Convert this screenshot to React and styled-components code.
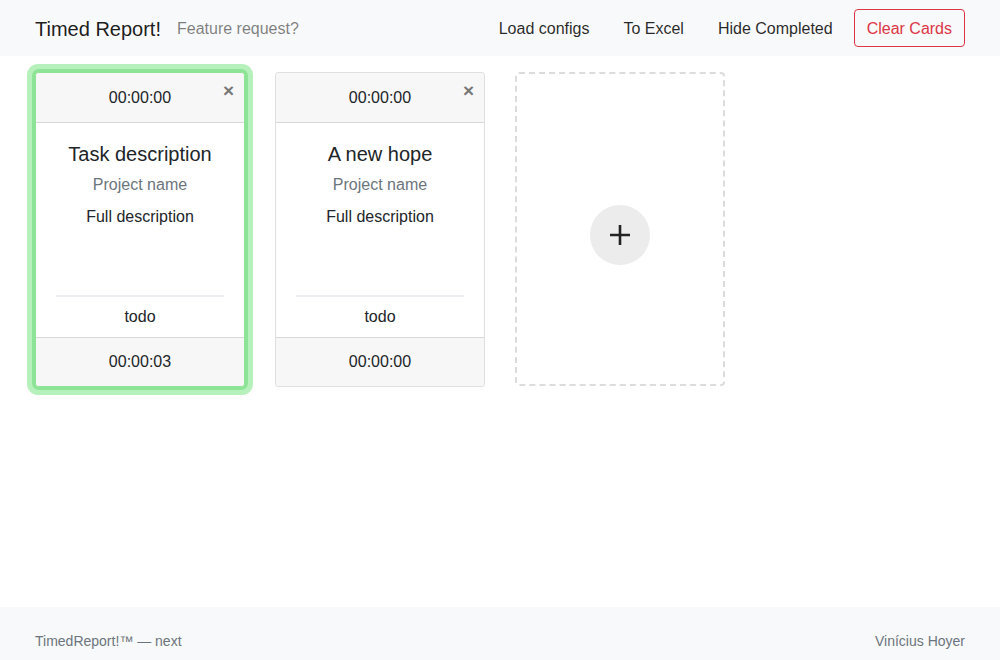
import React from 'react'
import styled, { createGlobalStyle, css } from 'styled-components'

const GlobalStyle = createGlobalStyle`
  * { box-sizing: border-box; }
  body {
    margin: 0;
    font-family: 'Liberation Sans', Arial, sans-serif;
    font-size: 16px;
    line-height: 1.5;
    color: #212529;
    background: #ffffff;
  }
`

const Navbar = styled.nav`
  height: 56px;
  background: #f8f9fa;
  display: flex;
  align-items: center;
  padding: 0 35px;
`

const Brand = styled.span`
  font-size: 20px;
  color: rgba(0, 0, 0, 0.9);
  margin-right: 16px;
  padding-top: 2px;
`

const NavLink = styled.a`
  color: ${p => (p.muted ? 'rgba(0, 0, 0, 0.5)' : 'rgba(0, 0, 0, 0.85)')};
  padding: 9px ${p => (p.muted ? '0' : '17px')} 7px;
  text-decoration: none;
  cursor: pointer;
`

const Spacer = styled.div`
  flex: 1;
`

const DangerButton = styled.button`
  font-family: inherit;
  font-size: 16px;
  line-height: 24px;
  height: 38px;
  padding: 7px 12px 5px;
  margin-left: 4px;
  color: #dc3545;
  background: transparent;
  border: 1px solid #dc3545;
  border-radius: 4px;
`

const Main = styled.main`
  min-height: calc(100vh - 109px);
  padding: 16px 35px;
  display: flex;
  align-items: flex-start;
  gap: 30px;
`

const Card = styled.div`
  width: 210px;
  display: flex;
  flex-direction: column;
  border: 1px solid rgba(0, 0, 0, 0.125);
  border-radius: 4px;
  background: #fff;
  text-align: center;
  ${p => p.active && css`
    border-color: #8ee496;
    box-shadow: 0 0 0 3px #8ee496, 0 0 0 8px #b6f1bc;
  `}
`

const CardHeader = styled.div`
  position: relative;
  height: 50px;
  line-height: 50px;
  background: #f7f7f7;
  border-bottom: 1px solid rgba(0, 0, 0, 0.125);
  border-radius: 3px 3px 0 0;
`

const Close = styled.span`
  position: absolute;
  top: 6px;
  right: 10px;
  line-height: 24px;
  font-size: 19px;
  font-weight: 700;
  color: #777;
  cursor: pointer;
`

const CardBody = styled.div`
  height: 214px;
  display: flex;
  flex-direction: column;
  padding: 19px 20px 8px;
`

const Title = styled.h5`
  margin: 0 0 7px;
  font-size: 20px;
  font-weight: 400;
  line-height: 24px;
`

const Subtitle = styled.h6`
  margin: 0 0 8px;
  font-size: 16px;
  font-weight: 400;
  line-height: 24px;
  color: #6c757d;
`

const Text = styled.p`
  margin: 0;
  line-height: 24px;
`

const Rule = styled.hr`
  margin: auto 0 8px;
  border: 0;
  border-top: 2px solid #eceef1;
`

const CardFooter = styled.div`
  height: 49px;
  line-height: 48px;
  background: #f7f7f7;
  border-top: 1px solid rgba(0, 0, 0, 0.125);
  border-radius: 0 0 3px 3px;
`

const AddCard = styled.div`
  width: 210px;
  height: 314px;
  border: 2px dashed #dcdcdc;
  border-radius: 4px;
  display: flex;
  align-items: center;
  justify-content: center;
`

const AddButton = styled.button`
  width: 60px;
  height: 60px;
  margin-top: 12px;
  border: 0;
  border-radius: 50%;
  background: #ececec;
  display: flex;
  align-items: center;
  justify-content: center;
  padding: 0;
  cursor: pointer;
`

const Footer = styled.footer`
  background: #f8f9fa;
  display: flex;
  justify-content: space-between;
  padding: 24px 35px;
  font-size: 14px;
  line-height: 21px;
  color: #6c757d;
`

const cards = [
  { title: 'Task description', active: true, total: '00:00:03' },
  { title: 'A new hope', active: false, total: '00:00:00' },
]

function TaskCard({ card }) {
  return (
    <Card active={card.active}>
      <CardHeader>
        00:00:00
        <Close>×</Close>
      </CardHeader>
      <CardBody>
        <Title>{card.title}</Title>
        <Subtitle>Project name</Subtitle>
        <Text>Full description</Text>
        <Rule />
        <Text>todo</Text>
      </CardBody>
      <CardFooter>{card.total}</CardFooter>
    </Card>
  )
}

export default function App() {
  return (
    <>
      <GlobalStyle />
      <Navbar>
        <Brand>Timed Report!</Brand>
        <NavLink muted>Feature request?</NavLink>
        <Spacer />
        <NavLink>Load configs</NavLink>
        <NavLink>To Excel</NavLink>
        <NavLink>Hide Completed</NavLink>
        <DangerButton>Clear Cards</DangerButton>
      </Navbar>
      <Main>
        {cards.map((c, i) => (
          <TaskCard key={`card-${i}`} card={c} />
        ))}
        <AddCard>
          <AddButton>
            <svg width="22" height="22" viewBox="0 0 22 22">
              <path d="M11 1v20M1 11h20" stroke="#222" strokeWidth="2.6" />
            </svg>
          </AddButton>
        </AddCard>
      </Main>
      <Footer>
        <span>TimedReport!™ — next</span>
        <span>Vinícius Hoyer</span>
      </Footer>
    </>
  )
}
